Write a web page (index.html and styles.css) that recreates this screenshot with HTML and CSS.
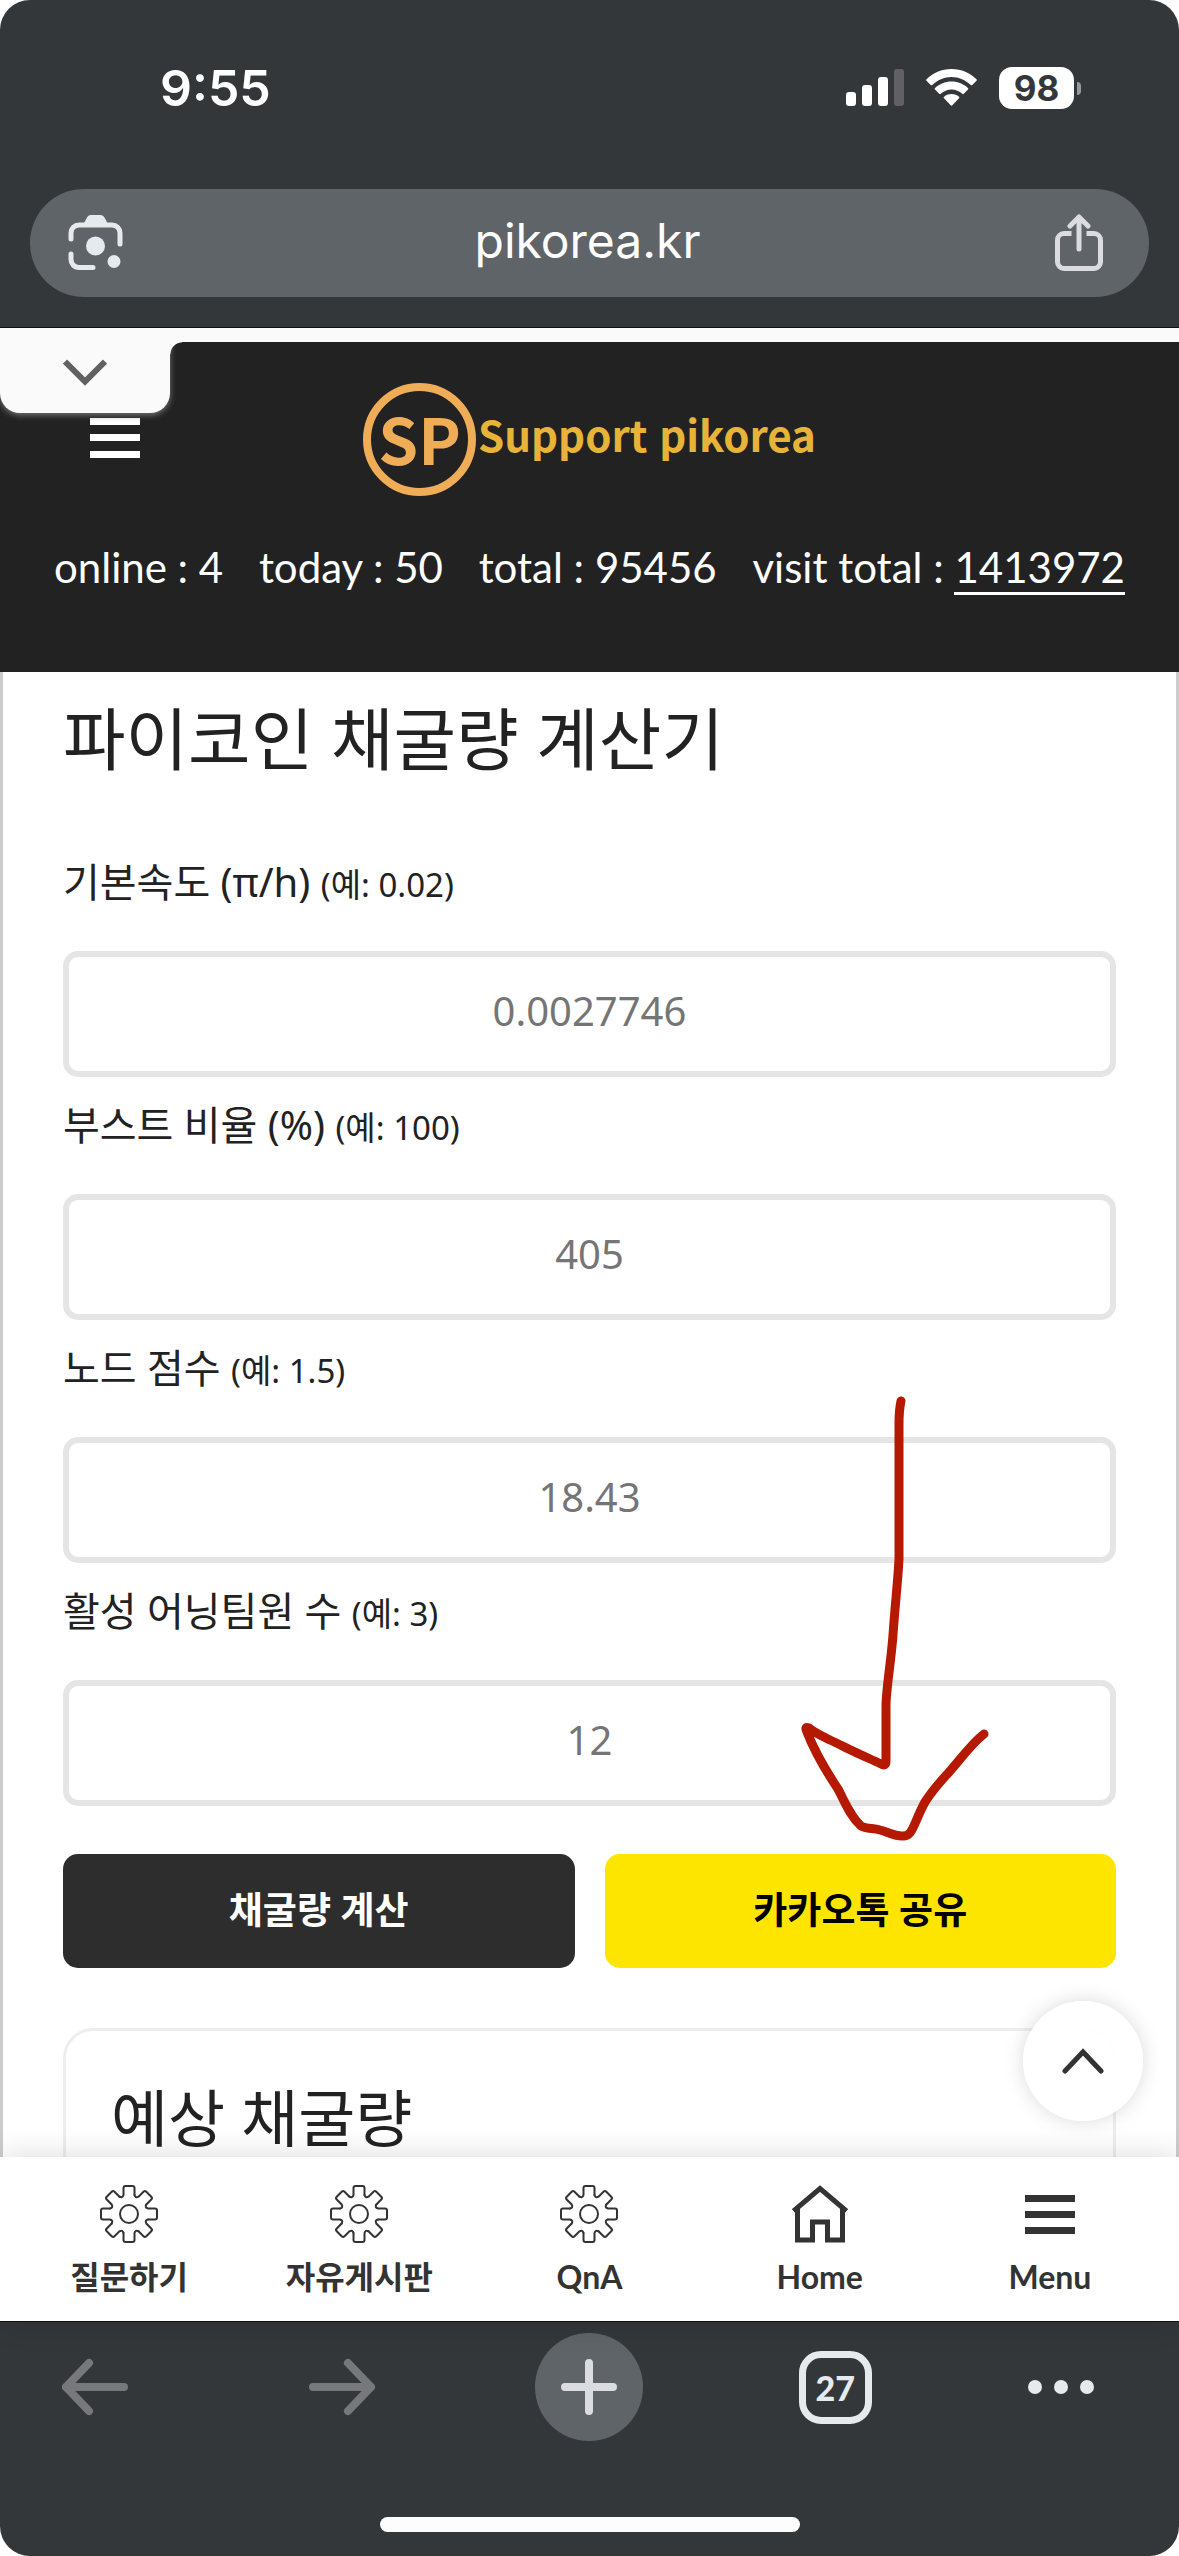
FILE: index.html
```html
<!DOCTYPE html>
<html lang="ko">
<head>
<meta charset="utf-8">
<meta name="viewport" content="width=device-width, initial-scale=1">
<title>파이코인 채굴량 계산기</title>
<link rel="stylesheet" href="styles.css">
</head>
<body>
<svg class="defs" aria-hidden="true">
  <defs>
    <path id="tooth" d="M-9.5-17.3Q-6.5-15.5-5.5-19V-26q0-2 2-2H3.500q2 0 2 2V-19"/>
    <symbol id="gear" viewBox="-29 -29 58 58">
      <g fill="none" stroke="#333" stroke-width="2" stroke-linecap="round">
        <circle r="9"/>
        <use href="#tooth"/>
        <use href="#tooth" transform="rotate(45)"/>
        <use href="#tooth" transform="rotate(90)"/>
        <use href="#tooth" transform="rotate(135)"/>
        <use href="#tooth" transform="rotate(180)"/>
        <use href="#tooth" transform="rotate(225)"/>
        <use href="#tooth" transform="rotate(270)"/>
        <use href="#tooth" transform="rotate(315)"/>
      </g>
    </symbol>
  </defs>
</svg>

<div class="screen">
  <div class="status-bar">
    <time class="clock">9:55</time>
    <div class="indicators">
      <svg width="58" height="38" viewBox="0 0 58 38" aria-label="Signal">
        <rect x="0" y="23" width="10" height="14" rx="3" fill="#fff"/>
        <rect x="16" y="16" width="10" height="21" rx="3" fill="#fff"/>
        <rect x="32" y="8" width="10" height="29" rx="3" fill="#fff"/>
        <rect x="48" y="0" width="10" height="37" rx="3" fill="#616163"/>
      </svg>
      <svg width="51" height="38" viewBox="0 0 51 38" aria-label="Wi-Fi">
        <path d="M25.500 0C15.500 0 7 4 .5 10.200q-.7.800 0 1.600l4.200 4.200q.8.700 1.600 0C11.500 11 18 8 25.500 8s14 3 19.200 8q.8.700 1.600 0l4.200-4.200q.7-.8 0-1.600C44 4 35.500 0 25.500 0Z" fill="#fff"/>
        <path d="M25.500 12.500c-6.500 0-12 2.500-16.500 6.500q-.7.800 0 1.600l4.200 4.200q.8.700 1.500 0c3-2.700 6.500-4.300 10.800-4.300s7.800 1.600 10.800 4.300q.7.700 1.500 0l4.200-4.200q.7-.8 0-1.600c-4.500-4-10-6.500-16.500-6.500Z" fill="#fff"/>
        <path d="M25.500 25c-3 0-5.500 1-7.500 2.700q-.8.800 0 1.600l6.700 7q.8.700 1.600 0l6.700-7q.8-.8 0-1.600C31 26 28.500 25 25.500 25Z" fill="#fff"/>
      </svg>
      <div class="battery"><span class="battery-level">98</span><i class="battery-cap"></i></div>
    </div>
  </div>

  <div class="address-row">
    <div class="address-bar">
      <button class="bar-button" aria-label="Lens">
        <svg width="56" height="56" viewBox="0 0 56 56" fill="none" stroke="#e6eaed" stroke-width="5" stroke-linecap="round">
          <path d="M3 24V18A8 8 0 0 1 11 10H44A8 8 0 0 1 52 18V29M3 39V44A8 8 0 0 0 11 52.500H25"/>
          <path d="M15.500 9 19 2.500Q20 0 22.500 0H33Q35 0 36.500 2.500L40 9Z" fill="#e6eaed" stroke="none"/>
          <circle cx="27.500" cy="31" r="9.500" fill="#e6eaed" stroke="none"/>
          <circle cx="46" cy="46.500" r="6.500" fill="#e6eaed" stroke="none"/>
        </svg>
      </button>
      <span class="url">pikorea.kr</span>
      <button class="bar-button" aria-label="Share">
        <svg width="48" height="58" viewBox="0 0 48 58" fill="none" stroke="#dbdce1" stroke-width="5" stroke-linecap="round" stroke-linejoin="round">
          <path d="M24 35V3M15 12 24 3 33 12"/>
          <path d="M16.500 19.500H9A6.500 6.500 0 0 0 2.500 26V48A6.500 6.500 0 0 0 9 54.500H39A6.500 6.500 0 0 0 45.500 48V26A6.500 6.500 0 0 0 39 19.500H31.500" stroke-linecap="butt"/>
        </svg>
      </button>
    </div>
  </div>

  <div class="page">
    <button class="pull-tab" aria-label="열기">
      <svg width="44" height="27" viewBox="0 0 44 27" fill="none" stroke="#616161" stroke-width="6"><path d="M2 2.500 22 22.500 42 2.500"/></svg>
    </button>

    <header class="site-header">
      <div class="brand-row">
        <button class="menu-button" aria-label="메뉴">
          <svg width="50" height="40" viewBox="0 0 50 40" fill="#fff"><rect width="50" height="7"/><rect y="16" width="50" height="7"/><rect y="33" width="50" height="7"/></svg>
        </button>
        <a class="brand" href="#">
          <span class="brand-mark">SP</span>
          <span class="brand-name">Support pikorea</span>
        </a>
      </div>
      <div class="stats">
        <span>online : 4</span>
        <span>today : 50</span>
        <span>total : 95456</span>
        <span>visit total : <a class="visit-link" href="#">1413972</a></span>
      </div>
    </header>

    <main class="content">
      <h1 class="title">파이코인 채굴량 계산기</h1>
      <form class="calculator">
        <div class="field">
          <label for="base">기본속도 (π/h) <small>(예: 0.02)</small></label>
          <input id="base" type="text" placeholder="0.0027746">
        </div>
        <div class="field">
          <label for="boost">부스트 비율 (%) <small>(예: 100)</small></label>
          <input id="boost" type="text" placeholder="405">
        </div>
        <div class="field">
          <label for="node">노드 점수 <small>(예: 1.5)</small></label>
          <input id="node" type="text" placeholder="18.43">
        </div>
        <div class="field">
          <label for="team">활성 어닝팀원 수 <small>(예: 3)</small></label>
          <input id="team" type="text" placeholder="12">
        </div>
        <div class="actions">
          <button class="action calculate" type="button">채굴량 계산</button>
          <button class="action share" type="button">카카오톡 공유</button>
        </div>
      </form>
      <section class="result">
        <h2 class="result-title">예상 채굴량</h2>
      </section>
    </main>

    <nav class="tab-bar">
      <a href="#"><svg width="58" height="58"><use href="#gear"/></svg>질문하기</a>
      <a href="#"><svg width="58" height="58"><use href="#gear"/></svg>자유게시판</a>
      <a href="#"><svg width="58" height="58"><use href="#gear"/></svg>QnA</a>
      <a href="#">
        <svg width="56" height="58" viewBox="0 0 56 58" fill="none" stroke="#333" stroke-width="5"><path d="M1.500 26 28 3.500 54.500 26M5.500 22V55H20.500V37H35.500V55H50.500V22"/></svg>
        Home
      </a>
      <a href="#">
        <svg width="50" height="58" viewBox="0 0 50 58" fill="#333"><rect y="10" width="50" height="7"/><rect y="26" width="50" height="7"/><rect y="42" width="50" height="7"/></svg>
        Menu
      </a>
      <button class="to-top" aria-label="맨 위로">
        <svg width="42" height="26" viewBox="0 0 42 26" fill="none" stroke="#333" stroke-width="5" stroke-linecap="round"><path d="M3 23 21 4 39 23"/></svg>
      </button>
    </nav>

    <svg class="arrow-note" width="190" height="452" viewBox="800 1393 190 452" fill="none" stroke="#b51a00" stroke-width="9" stroke-linecap="round" stroke-linejoin="round" aria-hidden="true">
      <path d="M901 1401Q899 1410 899 1424V1559C898 1580 895 1605 893 1635C891 1662 886 1690 886 1706V1761Q886 1767 881 1764C873 1760 863 1756 855 1752C846 1748 839 1744 830 1740C822 1736 815 1733 809 1728Q804 1726 807 1732C814 1750 826 1771 838 1789C845 1802 850 1816 861 1826C866 1829 873 1828 880 1830C888 1832 894 1836 902 1836C913 1837 913 1824 925 1802C934 1788 942 1780 950 1771C960 1760 971 1744 984 1734"/>
    </svg>
  </div>

  <div class="browser-toolbar">
    <div class="toolbar-buttons">
      <button class="tool" aria-label="Back">
        <svg width="68" height="64" viewBox="0 0 68 64" fill="none" stroke="#77787b" stroke-width="8" stroke-linecap="round" stroke-linejoin="round"><path d="M63 32H5M28 8 5 32 28 56"/></svg>
      </button>
      <button class="tool" aria-label="Forward">
        <svg width="68" height="64" viewBox="0 0 68 64" fill="none" stroke="#77787b" stroke-width="8" stroke-linecap="round" stroke-linejoin="round"><path d="M5 32H63M40 8 63 32 40 56"/></svg>
      </button>
      <button class="tool new-tab" aria-label="New tab">
        <svg width="56" height="56" viewBox="0 0 56 56" stroke="#dbdce1" stroke-width="8" stroke-linecap="round"><path d="M28 4V52M4 28H52"/></svg>
      </button>
      <button class="tool" aria-label="Tabs"><span class="tab-count">27</span></button>
      <button class="tool more" aria-label="More">
        <svg width="68" height="14" viewBox="0 0 68 14" fill="#e6eaed"><circle cx="8" cy="7" r="7"/><circle cx="34" cy="7" r="7"/><circle cx="60" cy="7" r="7"/></svg>
      </button>
    </div>
    <div class="home-indicator"></div>
  </div>
</div>
</body>
</html>
```
FILE: styles.css
```css
* {
  box-sizing: border-box;
}

body {
  margin: 0;
  background: #fff;
  color: #222;
  font-family: "Noto Sans", "Noto Sans CJK KR", sans-serif;
}

button {
  display: flex;
  align-items: center;
  justify-content: center;
  margin: 0;
  padding: 0;
  border: 0;
  background: none;
  font: inherit;
}

a {
  color: inherit;
  text-decoration: none;
}

svg {
  display: block;
  flex: none;
}

.defs {
  position: absolute;
  width: 0;
  height: 0;
}

.screen {
  display: flex;
  flex-direction: column;
  height: 100vh;
  overflow: hidden;
  border-radius: 30px;
  background: #34373a;
}

/* Phone status bar */
.status-bar {
  display: flex;
  align-items: center;
  justify-content: space-between;
  padding: 56px 98px 0 160px;
  color: #fff;
  font-family: Inter, sans-serif;
}

.clock {
  font-size: 50px;
  font-weight: 600;
  line-height: 64px;
}

.indicators {
  display: flex;
  align-items: center;
  gap: 22px;
}

.battery {
  display: flex;
  align-items: center;
  gap: 3px;
}

.battery-level {
  width: 75px;
  border-radius: 13px;
  background: #fff;
  color: #34373a;
  font-size: 35px;
  font-weight: 700;
  line-height: 42px;
  text-align: center;
}

.battery-cap {
  width: 4px;
  height: 13px;
  border-radius: 0 4px 4px 0;
  background: #98999b;
}

/* Address bar */
.address-row {
  padding: 69px 30px 30px;
  border-bottom: 1px solid #111;
}

.address-bar {
  display: flex;
  align-items: center;
  justify-content: space-between;
  height: 108px;
  padding: 0 42px 0 38px;
  border-radius: 54px;
  background: #5f6468;
}

.bar-button {
  width: 56px;
}

.url {
  padding-bottom: 4px;
  color: #fff;
  font-family: Inter, sans-serif;
  font-size: 48px;
  line-height: 64px;
}

/* Web page */
.page {
  position: relative;
  display: flex;
  flex: 1;
  flex-direction: column;
  min-height: 0;
  border-top: 14px solid #fafafa;
  background: #fff;
}

.pull-tab {
  position: absolute;
  top: -14px;
  left: 0;
  width: 170px;
  height: 85px;
  padding-top: 4px;
  border-radius: 0 0 20px 20px;
  background: #fafafa;
  box-shadow: 0 2px 6px #777;
  clip-path: inset(14px -12px -12px 0);
}

/* Concave corner where the tab meets the strip above */
.pull-tab::after {
  content: "";
  position: absolute;
  top: 14px;
  left: 100%;
  width: 12px;
  height: 12px;
  background: radial-gradient(circle at 100% 100%, transparent 11px, #fafafa 12px);
}

.site-header {
  padding: 41px 54px 75px;
  background: #222;
  color: #fff;
}

.brand-row {
  display: grid;
  grid-template-columns: 1fr auto 1fr;
  align-items: center;
}

.menu-button {
  justify-self: start;
  margin-left: 36px;
  padding-bottom: 4px;
}

.brand {
  display: flex;
  align-items: center;
  gap: 2px;
  font-family: "Noto Sans CJK KR", sans-serif;
  font-weight: 700;
}

.brand-mark {
  width: 113px;
  height: 113px;
  border: 8px solid #f0ad58;
  border-radius: 50%;
  color: #f0ad58;
  font-size: 64px;
  line-height: 92px;
  text-align: center;
}

.brand-name {
  padding-bottom: 12px;
  color: #e8b339;
  font-size: 42px;
  line-height: 60px;
}

.stats {
  display: flex;
  justify-content: space-between;
  padding-top: 41px;
  font-family: Lato, sans-serif;
  font-size: 42px;
  line-height: 60px;
  white-space: nowrap;
}

.visit-link {
  border-bottom: 3px solid #fff;
}

.content {
  flex: 1;
  min-height: 0;
  overflow: hidden;
  padding: 25px 60px 0;
  border: solid #ccc;
  border-width: 0 3px;
}

.title {
  margin: 0 0 77px;
  font-size: 68px;
  font-weight: 400;
  line-height: 84px;
}

.field {
  display: flex;
  flex-direction: column;
  gap: 45px;
  margin-bottom: 24px;
}

.field label {
  font-size: 40px;
  line-height: 48px;
}

.field small {
  font-size: 33px;
  line-height: 33px;
}

.field input {
  width: 100%;
  height: 126px;
  padding: 0 20px 8px;
  border: 6px solid #e5e5e5;
  border-radius: 15px;
  background: #fff;
  font: inherit;
  font-size: 40px;
  text-align: center;
}

.field input::placeholder {
  color: #757575;
  opacity: 1;
}

.actions {
  display: grid;
  grid-template-columns: 1fr 1fr;
  gap: 30px;
  padding-top: 24px;
}

.action {
  height: 114px;
  padding-bottom: 6px;
  border-radius: 15px;
  font-size: 37px;
  font-weight: 700;
}

.calculate {
  background: #2d2d2d;
  color: #fff;
}

.share {
  background: #fee500;
  color: #000;
}

.result {
  margin-top: 60px;
  padding: 48px 45px;
  border: 3px solid #eee;
  border-radius: 30px;
}

.result-title {
  margin: 0;
  font-size: 62px;
  font-weight: 400;
  line-height: 78px;
}

/* Site tab bar */
.tab-bar {
  position: relative;
  display: grid;
  grid-template-columns: repeat(5, 1fr);
  padding: 28px 14px 24px;
  background: #fff;
  box-shadow: 0 0 30px rgba(0, 0, 0, 0.15);
}

.tab-bar a {
  display: flex;
  flex-direction: column;
  align-items: center;
  gap: 14px;
  color: #333;
  font-family: Lato, "Noto Sans CJK KR", sans-serif;
  font-size: 32px;
  font-weight: 700;
  line-height: 40px;
}

.to-top {
  position: absolute;
  right: 36px;
  bottom: 200px;
  width: 120px;
  height: 120px;
  border-radius: 50%;
  background: rgba(255, 255, 255, 0.9);
  box-shadow: 0 0 20px rgba(0, 0, 0, 0.15);
}

.arrow-note {
  position: absolute;
  top: 1051px;
  right: 189px;
  pointer-events: none;
}

/* Browser toolbar */
.browser-toolbar {
  padding: 11px 0 24px;
  border-top: 1px solid #111;
}

.toolbar-buttons {
  display: flex;
  justify-content: space-between;
  padding: 0 85px 0 41px;
}

.tool {
  width: 108px;
  height: 108px;
}

.new-tab {
  border-radius: 50%;
  background: #5f6468;
}

.tab-count {
  width: 73px;
  border: 7px solid #e6eaed;
  border-radius: 22px;
  color: #e6eaed;
  font-family: Lato, sans-serif;
  font-size: 34px;
  font-weight: 900;
  line-height: 59px;
}

.more {
  width: 66px;
}

.home-indicator {
  width: 420px;
  height: 15px;
  margin: 76px auto 0;
  border-radius: 8px;
  background: #fdfdfd;
}
```
